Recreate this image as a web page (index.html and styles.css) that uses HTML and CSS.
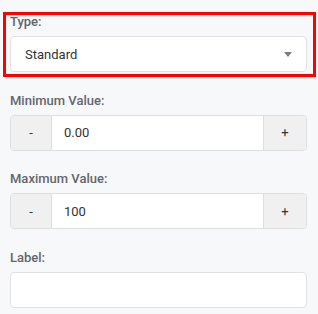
FILE: index.html
```html
<!DOCTYPE html>
<html>
<head>
<meta charset="utf-8">
<link rel="stylesheet" href="styles.css">
</head>
<body>
<div class="form">
  <div class="group highlighted">
    <label class="lbl">Type:</label>
    <div class="select">
      <span class="select-text">Standard</span>
      <svg class="caret" width="8" height="5" viewBox="0 0 8 5"><path d="M0 0 H8 L4 5 Z" fill="#7d7d7d"/></svg>
    </div>
  </div>
  <div class="group">
    <label class="lbl">Minimum Value:</label>
    <div class="spinner">
      <button class="btn btn-minus">-</button>
      <div class="value">0.00</div>
      <button class="btn btn-plus">+</button>
    </div>
  </div>
  <div class="group">
    <label class="lbl">Maximum Value:</label>
    <div class="spinner">
      <button class="btn btn-minus">-</button>
      <div class="value">100</div>
      <button class="btn btn-plus">+</button>
    </div>
  </div>
  <div class="group">
    <label class="lbl">Label:</label>
    <div class="text-input"></div>
  </div>
</div>
</body>
</html>
```

FILE: styles.css
```css
html, body {
  margin: 0;
  padding: 0;
  background: #f7f8fa;
}
body {
  font-family: Roboto, "Liberation Sans", sans-serif;
  color: #333;
}
.form {
  display: flex;
  flex-direction: column;
  gap: 18.5px;
  padding: 12px 11px 0 10px;
}
.group {
  display: flex;
  flex-direction: column;
  gap: 4px;
  position: relative;
}
.highlighted::after {
  content: "";
  position: absolute;
  left: -7px;
  top: 0;
  right: -9px;
  bottom: -5px;
  border: 3px solid #ff0000;
  pointer-events: none;
}
.lbl {
  display: block;
  font-size: 13px;
  line-height: 20px;
  font-weight: 500;
  color: #63666b;
}
.select {
  height: 36px;
  box-sizing: border-box;
  background: #fff;
  border: 1px solid #e2e2e2;
  border-radius: 4px;
  display: flex;
  align-items: center;
  justify-content: space-between;
  padding: 0 14px 0 14px;
}
.select-text {
  font-size: 13px;
  color: #333;
}
.caret {
  display: block;
}
.spinner {
  height: 36px;
  box-sizing: border-box;
  display: flex;
  border: 1px solid #dedede;
  border-radius: 4px;
  background: #fff;
  overflow: hidden;
}
.btn {
  font-family: inherit;
  font-size: 13px;
  color: #333;
  background: #f0f0f0;
  border: none;
  padding: 0;
  margin: 0;
}
.btn-minus {
  width: 41px;
  border-right: 1px solid #dedede;
}
.btn-plus {
  width: 43px;
  border-left: 1px solid #dedede;
}
.value {
  flex: 1;
  display: flex;
  align-items: center;
  padding-left: 12px;
  font-size: 13px;
  color: #333;
}
.text-input {
  height: 36px;
  box-sizing: border-box;
  background: #fff;
  border: 1px solid #e2e2e2;
  border-radius: 4px;
}
```
